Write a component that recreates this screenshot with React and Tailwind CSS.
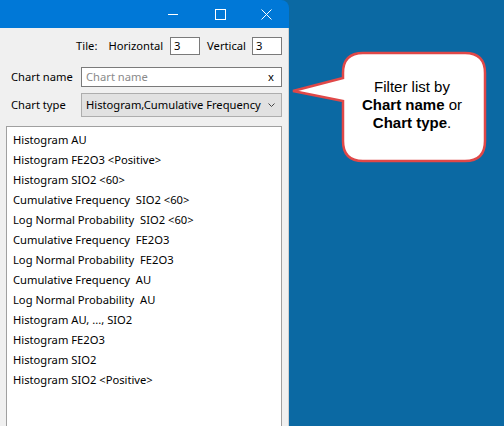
import React from "react";

const items = [
  "Histogram AU",
  "Histogram FE2O3 <Positive>",
  "Histogram SIO2 <60>",
  "Cumulative Frequency\u00a0 SIO2 <60>",
  "Log Normal Probability\u00a0 SIO2 <60>",
  "Cumulative Frequency\u00a0 FE2O3",
  "Log Normal Probability\u00a0 FE2O3",
  "Cumulative Frequency\u00a0 AU",
  "Log Normal Probability\u00a0 AU",
  "Histogram AU, ..., SIO2",
  "Histogram FE2O3",
  "Histogram SIO2",
  "Histogram SIO2 <Positive>",
];

export default function App() {
  return (
    <div className="relative w-[504px] h-[426px] overflow-hidden bg-[#0b69a3]" style={{ fontFamily: '"Noto Sans", "Segoe UI", sans-serif' }}>
      <div className="w-[289px] h-[426px] flex flex-col">
        <div className="h-[28px] bg-[#0078d7] rounded-tr-[8px] flex justify-end items-center pr-[17px] shrink-0">
          <svg width="10" height="10" viewBox="0 0 10 10" className="mr-[37px]">
            <path d="M0 5.5H10" stroke="white" strokeWidth="1" />
          </svg>
          <svg width="11" height="11" viewBox="0 0 11 11" className="mr-[35px]">
            <rect x="0.5" y="0.5" width="10" height="10" fill="none" stroke="white" strokeWidth="1" />
          </svg>
          <svg width="11" height="11" viewBox="0 0 11 11">
            <path d="M0.5 0.5L10.5 10.5M10.5 0.5L0.5 10.5" stroke="white" strokeWidth="1" />
          </svg>
        </div>
        <div className="flex-1 bg-[#f0f0f0] flex flex-col pl-[6px] pr-[6px] text-[11.2px] text-black border-r border-[#d0d0d0]">
          <div className="flex justify-end items-center mt-[9px] h-[18px]">
            <span className="mr-[11px]">Tile:</span>
            <span className="mr-[7px]">Horizontal</span>
            <div className="w-[30px] h-[18px] bg-white border border-[#7a7a7a] pl-[3px] leading-[16px] mr-[7px]">3</div>
            <span className="mr-[6px]">Vertical</span>
            <div className="w-[30px] h-[18px] bg-white border border-[#7a7a7a] pl-[3px] leading-[16px]">3</div>
          </div>
          <div className="flex items-center mt-[12px] h-[20px]">
            <span className="w-[75px] pl-[5px] whitespace-nowrap">Chart name</span>
            <div className="flex-1 h-[20px] bg-white border border-[#7a7a7a] flex items-center pl-[4px] pr-[7px]">
              <span className="flex-1 text-[#8a8a8a]">Chart name</span>
              <span>x</span>
            </div>
          </div>
          <div className="flex items-center mt-[6px] h-[24px]">
            <span className="w-[75px] pl-[5px] whitespace-nowrap">Chart type</span>
            <div className="flex-1 h-[24px] bg-[#e1e1e1] border border-[#adadad] flex items-center pl-[4px] pr-[6px]">
              <span className="flex-1 whitespace-nowrap">Histogram,Cumulative Frequency</span>
              <svg width="7" height="4" viewBox="0 0 7 4">
                <path d="M0.5 0.5L3.5 3.5L6.5 0.5" fill="none" stroke="#444" strokeWidth="1" />
              </svg>
            </div>
          </div>
          <div className="mt-[9px] flex-1 bg-white border border-[#a0a0a0] border-b-0 pt-[3px] pl-[6px] leading-[20px]">
            {items.map((t) => (
              <div key={t} className="whitespace-pre">{t}</div>
            ))}
          </div>
        </div>
      </div>
      <svg className="absolute left-0 top-0" width="504" height="426" viewBox="0 0 504 426">
        <path
          d="M363 53 H465 Q485 53 485 73 V141 Q485 161 465 161 H363 Q343 161 343 141 V101 L293 91 L343 78 V73 Q343 53 363 53 Z"
          fill="white"
          stroke="#e04848"
          strokeWidth="2.5"
          strokeLinejoin="miter"
        />
      </svg>
      <div className="absolute left-[341px] top-[78px] w-[142px] text-center text-[15px] leading-[18px] text-black" style={{ fontFamily: '"Liberation Sans", Arial, sans-serif' }}>
        <div>Filter list by</div>
        <div><b>Chart name</b> or</div>
        <div><b>Chart type</b>.</div>
      </div>
    </div>
  );
}
